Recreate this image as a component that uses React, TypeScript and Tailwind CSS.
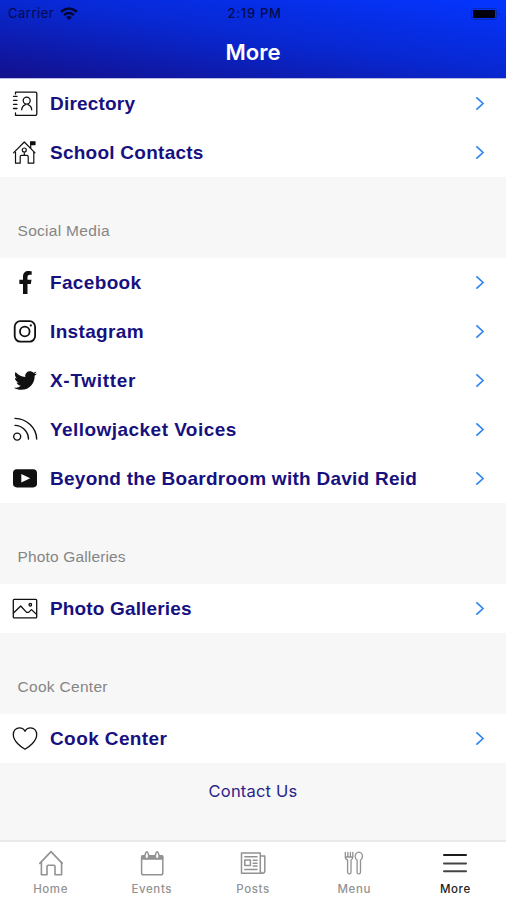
import type { ReactNode } from "react";
import { FaFacebookF, FaTwitter } from "react-icons/fa";

type Item = { label: string; icon: ReactNode; tracking: string };
type Section = { title?: string; titleTracking?: string; items: Item[] };

function Line({ children, stroke = 1.2 }: { children: ReactNode; stroke?: number }) {
  return (
    <svg
      width="26"
      height="26"
      viewBox="0 0 26 26"
      fill="none"
      stroke="currentColor"
      strokeWidth={stroke}
      strokeLinecap="round"
      strokeLinejoin="round"
      className="shrink-0"
    >
      {children}
    </svg>
  );
}

const directoryIcon = (
  <Line stroke={1.3}>
    <path d="M3.5 3V1.2H23.5Q24.8 1.2 24.8 2.5V23Q24.8 24.3 23.5 24.3H3.5V22" />
    <path d="M1.5 5.3H5M1.5 9.3H5M1.5 13.3H5M1.5 17.5H5" />
    <circle cx="14.7" cy="9.6" r="3.5" />
    <path d="M9.7 18.8C9.9 15.6 11.8 14.4 13.4 13.7M19.7 18.8C19.5 15.6 17.6 14.4 16 13.7" />
  </Line>
);

const schoolIcon = (
  <Line stroke={1.2}>
    <path d="M1.5 12.8L12.3 2L23 12.8" />
    <path d="M3.5 12V23.2H8.2V16.5Q8.2 15.3 9.4 15.3H15Q16.2 15.3 16.2 16.5V23.2H21.8V12" />
    <circle cx="12.3" cy="10" r="2" />
    <path d="M12.3 12.5V15M18.7 8V2" />
    <path d="M18.7 1.8H23V4.6H18.7Z" fill="currentColor" />
  </Line>
);

const instagramIcon = (
  <Line stroke={1.8}>
    <rect x="2.7" y="2.2" width="20.4" height="20.4" rx="5.5" />
    <circle cx="12.8" cy="12.5" r="4.8" />
    <circle cx="18.8" cy="6.4" r="1.1" fill="currentColor" stroke="none" />
  </Line>
);

const feedIcon = (
  <Line stroke={1.4}>
    <circle cx="5.2" cy="19.6" r="3.5" />
    <path d="M3 8.4C10.5 8.6 16.3 14.5 16.5 22" />
    <path d="M3 1.4C14.7 1.7 24.3 10.5 24.7 22" />
  </Line>
);

const youtubeIcon = (
  <Line>
    <rect x="1" y="3.2" width="24" height="18.2" rx="3.8" fill="currentColor" stroke="none" />
    <path d="M9.3 8V16.4L18.2 12.2Z" fill="white" stroke="none" />
  </Line>
);

const photoIcon = (
  <Line stroke={1.3}>
    <rect x="1.3" y="3.3" width="23.4" height="18.6" rx="1" />
    <path d="M1.5 17L8.7 10L14.6 16.4L16.6 16.4L19.5 13.6L24.5 18.4" />
    <circle cx="18.3" cy="8.8" r="1.3" />
  </Line>
);

const heartIcon = (
  <Line stroke={1.3}>
    <path d="M13 23.2C9.5 21.3 1.3 15.5 1.3 8.4C1.3 4.5 4 1.8 7.4 1.8C10 1.8 12.1 3.2 13 5.3C13.9 3.2 16 1.8 18.6 1.8C22 1.8 24.7 4.5 24.7 8.4C24.7 15.5 16.5 21.3 13 23.2Z" />
  </Line>
);

const sections: Section[] = [
  {
    items: [
      { label: "Directory", icon: directoryIcon, tracking: "tracking-[0.2px]" },
      { label: "School Contacts", icon: schoolIcon, tracking: "tracking-[0.25px]" },
    ],
  },
  {
    title: "Social Media",
    titleTracking: "tracking-[0.3px]",
    items: [
      { label: "Facebook", icon: <FaFacebookF size={23} />, tracking: "tracking-[0.35px]" },
      { label: "Instagram", icon: instagramIcon, tracking: "tracking-[0.35px]" },
      { label: "X-Twitter", icon: <FaTwitter size={23} />, tracking: "tracking-[0.7px]" },
      { label: "Yellowjacket Voices", icon: feedIcon, tracking: "tracking-[0.45px]" },
      {
        label: "Beyond the Boardroom with David Reid",
        icon: youtubeIcon,
        tracking: "tracking-[0.26px]",
      },
    ],
  },
  {
    title: "Photo Galleries",
    titleTracking: "tracking-[0.15px]",
    items: [{ label: "Photo Galleries", icon: photoIcon, tracking: "tracking-[0.15px]" }],
  },
  {
    title: "Cook Center",
    titleTracking: "tracking-[0.3px]",
    items: [{ label: "Cook Center", icon: heartIcon, tracking: "tracking-[0.4px]" }],
  },
];

const tabs = [
  {
    label: "Home",
    icon: (
      <Line stroke={1.6}>
        <path d="M1.8 13.4L13 1.6L24.2 13.4" />
        <path d="M3.4 12.4V24.7H9V16.4Q9 15.2 10.2 15.2H15.8Q17 15.2 17 16.4V24.7H23.6V12.4" />
      </Line>
    ),
  },
  {
    label: "Events",
    icon: (
      <Line stroke={1.5}>
        <rect x="2.6" y="5.8" width="21.2" height="18.9" rx="1.8" />
        <path d="M3 6H23.5V9H3Z" fill="currentColor" />
        <path d="M6 8.5V5Q7.8-1.5 9.6 5V8.5ZM16.4 8.5V5Q18.2-1.5 20 5V8.5Z" fill="white" />
      </Line>
    ),
  },
  {
    label: "Posts",
    icon: (
      <Line stroke={1.5}>
        <path d="M20.3 2.9H1.5V23.2H22.5Q24.8 23.2 24.8 21V6H20.5M20.3 2.9V21Q20.3 23.2 22.5 23.2" />
        <rect x="4.8" y="10" width="5.6" height="5.4" />
        <path d="M4.8 6.7H17M13.2 10.3H17M13.2 13.2H17M13.2 16.1H17M4.8 19.4H17" />
      </Line>
    ),
  },
  {
    label: "Menu",
    icon: (
      <Line stroke={1.3}>
        <path d="M4.3 2.5V7Q4.3 9.4 6.6 10V22.2A1.7 1.7 0 0 0 10 22.2V10Q11.8 9.4 11.8 7V2.5M6.8 2.5V7M9.4 2.5V7M4.3 7H11.8" />
        <path d="M17.8 2.1C15.6 2.1 14.2 4.2 14.2 6.4C14.2 8.2 15 9.5 16.1 10V22.2A1.7 1.7 0 0 0 19.5 22.2V10C20.6 9.5 21.4 8.2 21.4 6.4C21.4 4.2 20 2.1 17.8 2.1Z" />
      </Line>
    ),
  },
  {
    label: "More",
    active: true,
    icon: (
      <Line stroke={2}>
        <path d="M2 5H24" />
        <path d="M2 13.4H24M2 21.3H24" stroke="#444444" />
      </Line>
    ),
  },
];

function StatusBar() {
  return (
    <div className="flex h-[27px] items-center justify-between pr-1.5 pl-2 font-['Inter',sans-serif] text-[13px] text-[#020b4c]">
      <div className="flex w-40 items-center gap-1.5">
        <span className="tracking-[0.5px]">Carrier</span>
        <svg width="18" height="13" viewBox="0 0 18 13" fill="none" stroke="#010630" strokeWidth="2.4">
          <path d="M1 4.8Q9-1.8 17 4.8M4 8Q9 3.9 14 8" />
          <path d="M9 13L6.2 10.2Q9 7.8 11.8 10.2Z" fill="#010630" stroke="none" />
        </svg>
      </div>
      <span className="pl-px font-medium tracking-[0.7px]">2:19 PM</span>
      <div className="flex w-40 justify-end">
        <svg width="29" height="12" viewBox="0 0 29 12">
          <rect x="0.5" y="0.5" width="25" height="11" rx="2.5" fill="none" stroke="#0629b4" />
          <rect x="2" y="2" width="22" height="8" rx="1" fill="#00010c" />
          <path d="M27 4Q28.5 6 27 8Z" fill="#03209c" />
        </svg>
      </div>
    </div>
  );
}

function Row({ item }: { item: Item }) {
  return (
    <li className="flex h-[49px] items-center bg-white pr-5 pl-3">
      <span className="flex w-[26px] shrink-0 justify-center text-[#101010]">{item.icon}</span>
      <span
        className={`${item.tracking} ml-3 text-[19px] leading-6 font-bold whitespace-nowrap text-[#17107f]`}
      >
        {item.label}
      </span>
      <svg
        width="10"
        height="15"
        viewBox="0 0 10 15"
        fill="none"
        stroke="#2f86f3"
        strokeWidth="1.7"
        className="mr-px ml-auto"
      >
        <path d="M1.4 1.3L8 7.5L1.4 13.7" />
      </svg>
    </li>
  );
}

export default function App() {
  return (
    <div className="flex h-[900px] w-[506px] flex-col overflow-hidden bg-[#f7f7f7] font-['Liberation_Sans',sans-serif]">
      <header className="h-[79px] shrink-0 border-b border-[#b9b9e4] bg-[linear-gradient(188deg,#0435ff_0%,#0828d2_48%,#13108c_100%)]">
        <StatusBar />
        <h1 className="text-center font-['Inter',sans-serif] text-[22px] leading-[50px] font-semibold text-white">
          More
        </h1>
      </header>

      <main className="grow">
        {sections.map((section, i) => (
          <section key={i}>
            {section.title && (
              <h2
                className={`${section.titleTracking} h-[81px] pt-11 pl-[17.5px] text-[15.5px] leading-5 text-[#858585]`}
              >
                {section.title}
              </h2>
            )}
            <ul>
              {section.items.map((item) => (
                <Row key={item.label} item={item} />
              ))}
            </ul>
          </section>
        ))}
        <p className="pt-4 text-center font-['Inter',sans-serif] text-[16.5px] leading-6 tracking-[0.2px] text-[#2b2488]">
          Contact Us
        </p>
      </main>

      <nav className="grid h-[60px] shrink-0 grid-cols-5 border-t-2 border-[#e9e9e9] bg-white">
        {tabs.map((tab) => (
          <a
            key={tab.label}
            className={`flex flex-col items-center pt-2 font-['Inter',sans-serif] text-[11.5px] leading-4 font-medium tracking-[0.6px] ${
              tab.active ? "text-[#1c1c1c]" : "text-[#929292]"
            }`}
          >
            {tab.icon}
            <span className="mt-[5px]">{tab.label}</span>
          </a>
        ))}
      </nav>
    </div>
  );
}
